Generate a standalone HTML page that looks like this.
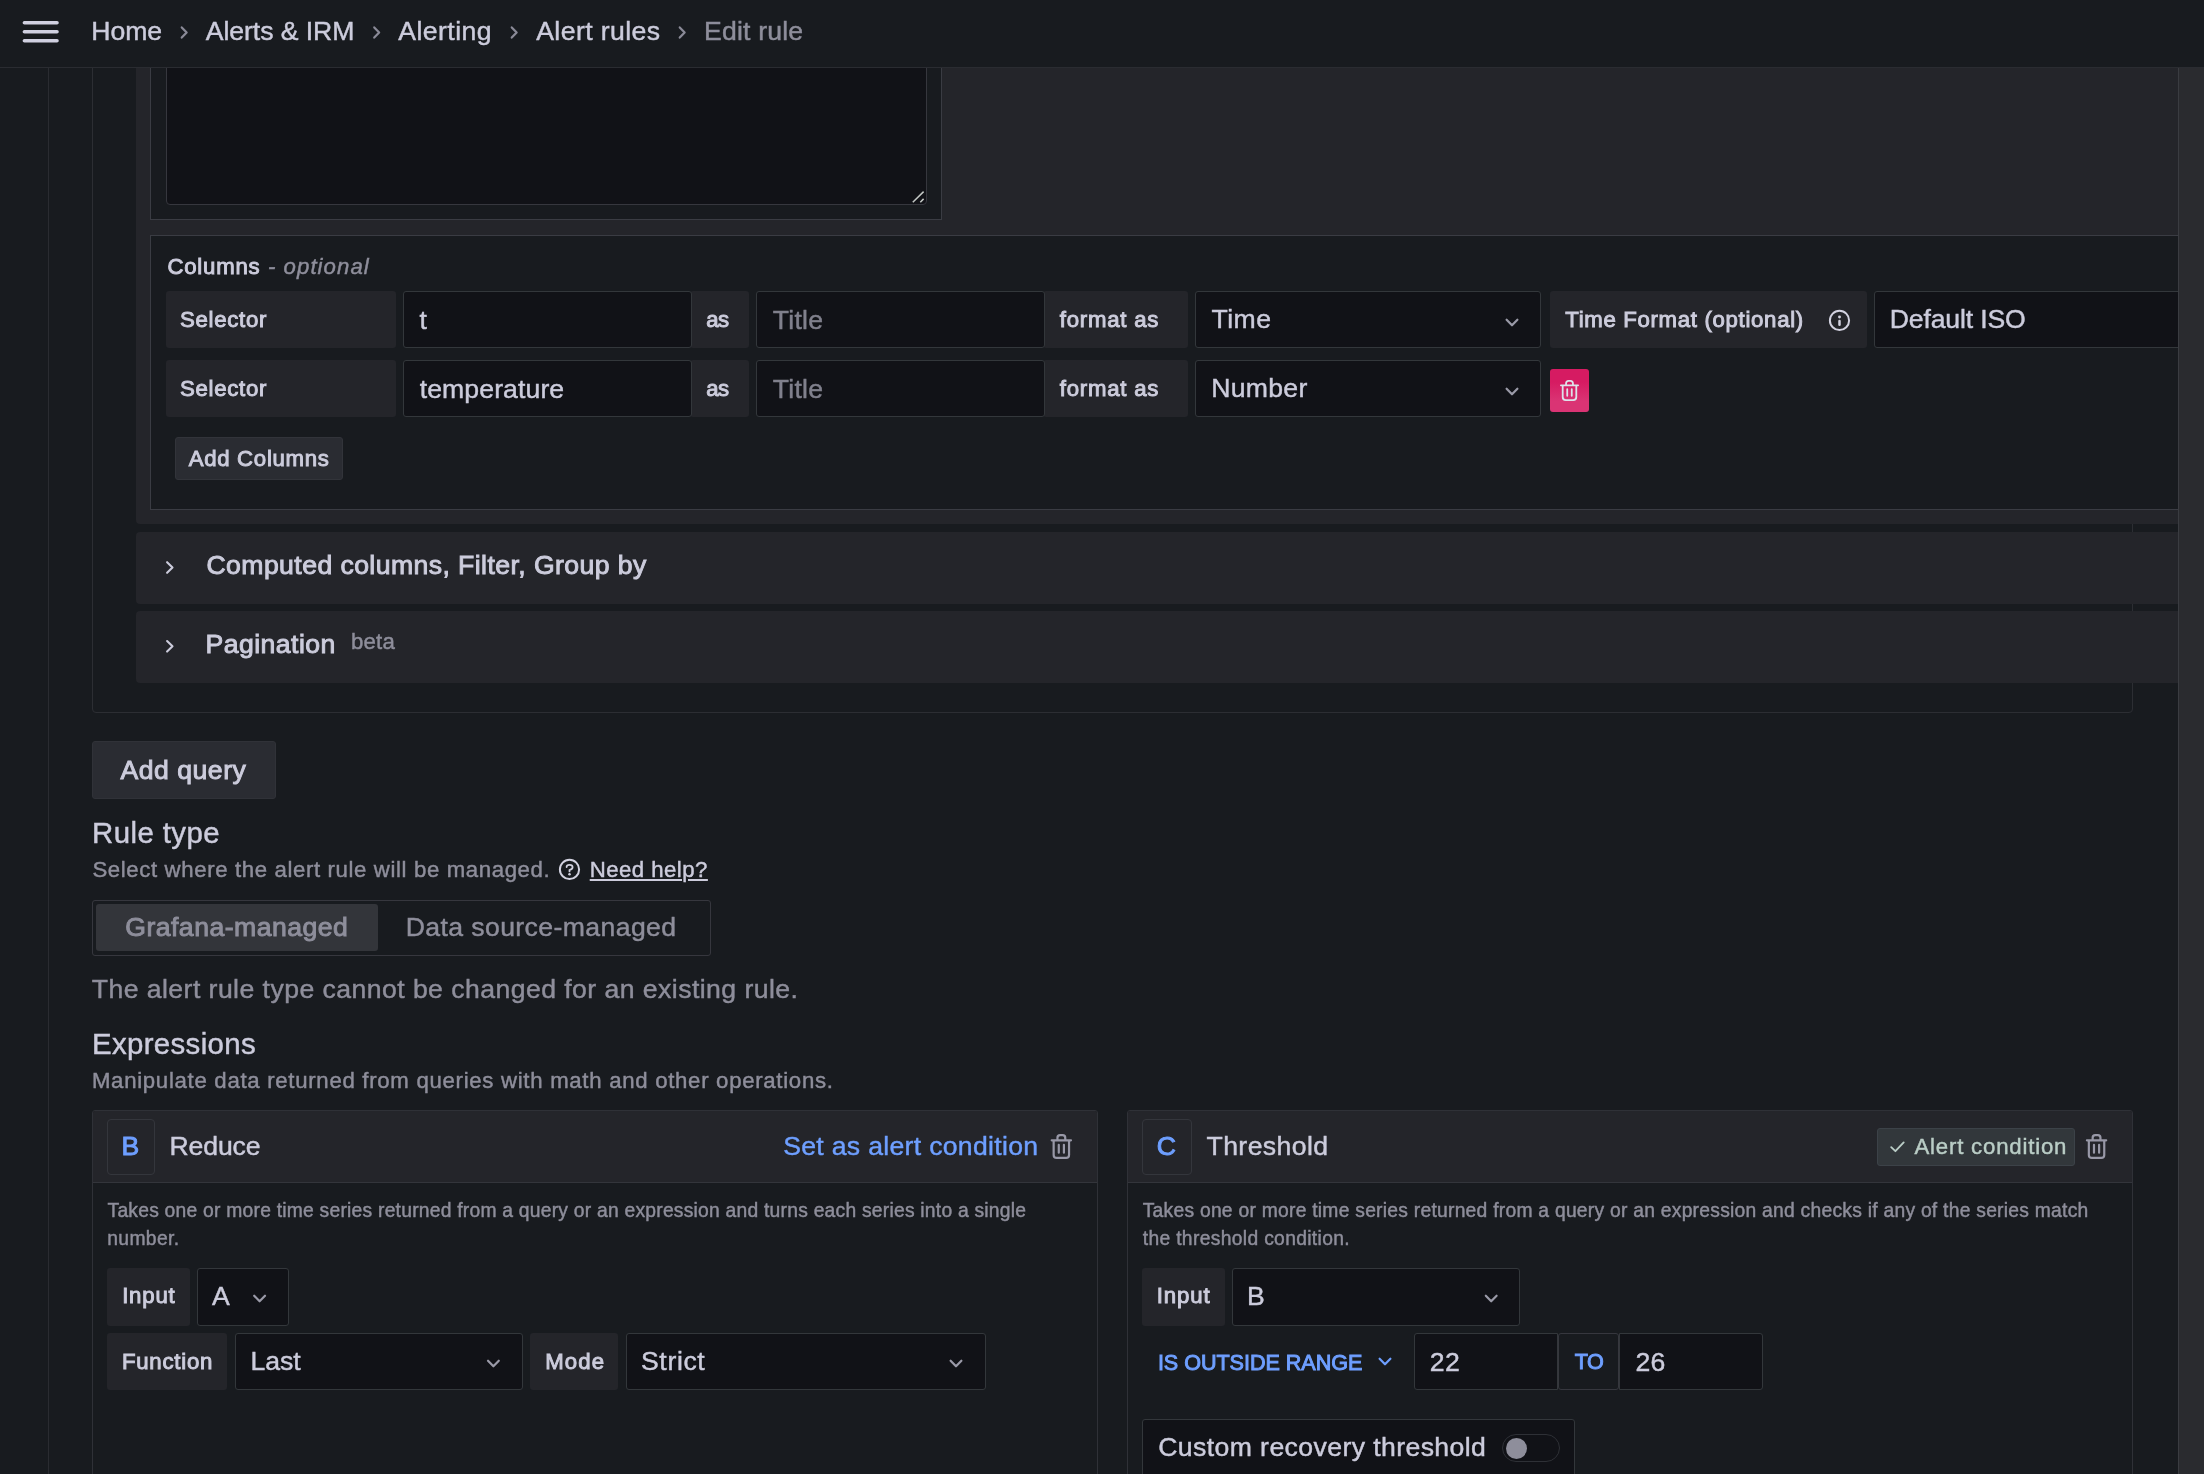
<!DOCTYPE html>
<html lang="en"><head><meta charset="utf-8"><title>Edit rule - Alert rules - Alerting - Grafana</title>
<style>
*{box-sizing:border-box;margin:0;padding:0}
html,body{width:2204px;height:1474px;overflow:hidden;background:#181b1f}
body{position:relative;font-family:"Liberation Sans",sans-serif;color:#ccccdc}
.a{position:absolute}
.t{position:absolute;white-space:nowrap;line-height:30px;height:30px;-webkit-text-stroke:0.45px currentColor}
.m{-webkit-text-stroke:0.95px currentColor}
#tx{position:absolute;left:0;top:0;width:2204px;height:1474px;will-change:transform}
.lbl{position:absolute;background:#24252a;border-radius:3px}
.inp{position:absolute;background:#111217;border:1px solid #33373b;border-radius:3px}
.band{position:absolute;background:#24252a}
svg{position:absolute;overflow:visible}
</style></head>
<body>
<div class="a" style="left:92px;top:0;width:2041px;height:713px;border:1px solid #2c2e33;border-radius:0 0 4px 4px"></div>
<div class="a" style="left:48px;top:68px;width:1px;height:1406px;background:#2a2c31"></div>
<div class="band" style="left:136px;top:68px;width:2042px;height:455.5px;border-radius:0 0 0 4px"></div>
<div class="a" style="left:150px;top:40px;width:792px;height:180px;background:#181b1f;border:1px solid #3a3c43"></div>
<div class="a" style="left:166px;top:40px;width:761px;height:165px;background:#111217;border:1px solid #36373e;border-radius:0 0 4px 4px"></div>
<svg style="left:0;top:0" width="1" height="1"><path d="M912.8 202.2L923.6 191.6M920.3 202.2L923.6 198.9" stroke="#c3c8c5" stroke-width="1.5" stroke-linecap="butt"/></svg>
<div class="a" style="left:150px;top:235px;width:2040px;height:275px;background:#181b1f;border:1px solid #3a3c43"></div>
<div class="lbl" style="left:166px;top:291px;width:230px;height:57.2px;"></div>
<div class="lbl" style="left:690px;top:291px;width:59px;height:57.2px;"></div>
<div class="lbl" style="left:1043px;top:291px;width:145px;height:57.2px;"></div>
<div class="inp" style="left:403px;top:291px;width:288.5px;height:57.2px;"></div>
<div class="inp" style="left:756px;top:291px;width:288.5px;height:57.2px;"></div>
<div class="inp" style="left:1195px;top:291px;width:346px;height:57.2px;"></div>
<div class="lbl" style="left:166px;top:360.3px;width:230px;height:56.5px;"></div>
<div class="lbl" style="left:690px;top:360.3px;width:59px;height:56.5px;"></div>
<div class="lbl" style="left:1043px;top:360.3px;width:145px;height:56.5px;"></div>
<div class="inp" style="left:403px;top:360.3px;width:288.5px;height:56.5px;"></div>
<div class="inp" style="left:756px;top:360.3px;width:288.5px;height:56.5px;"></div>
<div class="inp" style="left:1195px;top:360.3px;width:346px;height:56.5px;"></div>
<div class="lbl" style="left:1550px;top:291px;width:317px;height:57.2px;"></div>
<div class="inp" style="left:1874px;top:291px;width:326px;height:57.2px;"></div>
<svg style="left:0;top:0" width="1" height="1"><path d="M1506.6 319.7L1512 325.3L1517.4 319.7" fill="none" stroke="#9a9aa8" stroke-width="2.2" stroke-linecap="round" stroke-linejoin="round"/></svg>
<svg style="left:0;top:0" width="1" height="1"><path d="M1506.6 388.7L1512 394.3L1517.4 388.7" fill="none" stroke="#9a9aa8" stroke-width="2.2" stroke-linecap="round" stroke-linejoin="round"/></svg>
<svg style="left:0;top:0" width="1" height="1"><circle cx="1839.5" cy="320.45" r="9.6" fill="none" stroke="#d2d2e0" stroke-width="2.0"/><circle cx="1839.5" cy="316.95" r="1.45" fill="#d2d2e0"/><path d="M1839.5 320.95V324.75" stroke="#d2d2e0" stroke-width="2.5" stroke-linecap="round"/></svg>
<div class="a" style="left:1550px;top:369px;width:39px;height:43px;border-radius:3px;background:linear-gradient(180deg,#d61b62 0%,#d61b62 30%,#da3474 75%,#da3474 100%)"></div>
<svg style="left:0;top:0" width="1" height="1"><path d="M1560.90 385.29H1578.10M1566.05 385.29V383.50Q1566.05 380.90 1568.65 380.90H1570.35Q1572.95 380.90 1572.95 383.50V385.29M1562.70 385.29V397.10Q1562.70 400.10 1565.70 400.10H1573.30Q1576.30 400.10 1576.30 397.10V385.29M1567.24 389.03V395.75M1571.76 389.03V395.75" fill="none" stroke="#dde2ea" stroke-width="1.8" stroke-linecap="round" stroke-linejoin="round"/></svg>
<div class="a" style="left:175px;top:437px;width:167.5px;height:43px;border-radius:3px;background:#2a2c32;border:1px solid #32343a"></div>
<div class="band" style="left:136px;top:532px;width:2042px;height:72px;border-radius:4px 0 0 4px"></div>
<div class="band" style="left:136px;top:611px;width:2042px;height:72px;border-radius:4px 0 0 4px"></div>
<svg style="left:0;top:0" width="1" height="1"><path d="M167.10000000000002 562.2L172.5 567.5L167.10000000000002 572.8" fill="none" stroke="#ccccdc" stroke-width="2.1" stroke-linecap="round" stroke-linejoin="round"/></svg>
<svg style="left:0;top:0" width="1" height="1"><path d="M167.10000000000002 641.0L172.5 646.3L167.10000000000002 651.5999999999999" fill="none" stroke="#ccccdc" stroke-width="2.1" stroke-linecap="round" stroke-linejoin="round"/></svg>
<div class="a" style="left:92px;top:741px;width:184px;height:58px;border-radius:3px;background:#2a2c32;border:1px solid #303238"></div>
<svg style="left:0;top:0" width="1" height="1"><circle cx="569.5" cy="869.4" r="9.6" fill="none" stroke="#d2d2e0" stroke-width="2.0"/><path d="M566.6 867.1Q566.6 864.9 569.5 864.9Q572.6 864.9 572.6 867.1999999999999Q572.6 869.0 569.5 870.1V871.4" fill="none" stroke="#d2d2e0" stroke-width="1.75" stroke-linecap="round"/><circle cx="569.5" cy="874.1999999999999" r="1.25" fill="#d2d2e0"/></svg>
<div class="a" style="left:92px;top:900px;width:619px;height:56px;border:1px solid #36373e;border-radius:3px"></div>
<div class="a" style="left:96px;top:904px;width:282px;height:47px;background:#33353a;border-radius:3px"></div>
<div class="a" style="left:92px;top:1110px;width:1006px;height:400px;border:1px solid #2f3137;border-radius:3px 3px 0 0;background:#181b1f"></div>
<div class="a" style="left:93px;top:1111px;width:1004px;height:72px;background:#24252a;border-bottom:1px solid #33353b;border-radius:2px 2px 0 0"></div>
<div class="a" style="left:107px;top:1119px;width:48px;height:56px;border:1px solid #34363c;border-radius:4px"></div>
<div class="a" style="left:1126.5px;top:1110px;width:1006.5px;height:400px;border:1px solid #2f3137;border-radius:3px 3px 0 0;background:#181b1f"></div>
<div class="a" style="left:1127.5px;top:1111px;width:1004.5px;height:72px;background:#24252a;border-bottom:1px solid #33353b;border-radius:2px 2px 0 0"></div>
<div class="a" style="left:1141.5px;top:1119px;width:50px;height:56px;border:1px solid #34363c;border-radius:4px"></div>
<svg style="left:0;top:0" width="1" height="1"><path d="M1051.70 1140.30H1071.00M1057.45 1140.30V1137.70Q1057.45 1135.10 1060.05 1135.10H1062.65Q1065.25 1135.10 1065.25 1137.70V1140.30M1053.65 1140.30V1154.90Q1053.65 1157.90 1056.65 1157.90H1066.05Q1069.05 1157.90 1069.05 1154.90V1140.30M1058.79 1144.75V1152.75M1063.91 1144.75V1152.75" fill="none" stroke="#9898a7" stroke-width="2.2" stroke-linecap="round" stroke-linejoin="round"/></svg>
<div class="lbl" style="left:107px;top:1268px;width:83px;height:57.5px;"></div>
<div class="inp" style="left:197px;top:1268px;width:92px;height:57.5px;"></div>
<svg style="left:0;top:0" width="1" height="1"><path d="M254.20000000000002 1295.7L259.6 1301.3L265.0 1295.7" fill="none" stroke="#9a9aa8" stroke-width="2.2" stroke-linecap="round" stroke-linejoin="round"/></svg>
<div class="lbl" style="left:107px;top:1333px;width:120px;height:57px;"></div>
<div class="inp" style="left:235px;top:1333px;width:288px;height:57px;"></div>
<svg style="left:0;top:0" width="1" height="1"><path d="M488.0 1360.7L493.4 1366.3L498.79999999999995 1360.7" fill="none" stroke="#9a9aa8" stroke-width="2.2" stroke-linecap="round" stroke-linejoin="round"/></svg>
<div class="lbl" style="left:530px;top:1333px;width:88px;height:57px;"></div>
<div class="inp" style="left:626px;top:1333px;width:360px;height:57px;"></div>
<svg style="left:0;top:0" width="1" height="1"><path d="M950.6 1360.7L956 1366.3L961.4 1360.7" fill="none" stroke="#9a9aa8" stroke-width="2.2" stroke-linecap="round" stroke-linejoin="round"/></svg>
<div class="a" style="left:1877px;top:1128px;width:197.5px;height:38px;background:#32373b;border:1px solid #3c4248;border-radius:3px"></div>
<svg style="left:0;top:0" width="1" height="1"><path d="M1891.2 1147.2L1895.4 1151.2L1903.7 1142.4" fill="none" stroke="#bacdc6" stroke-width="1.85" stroke-linecap="round" stroke-linejoin="round"/></svg>
<svg style="left:0;top:0" width="1" height="1"><path d="M2086.90 1140.30H2106.20M2092.65 1140.30V1137.70Q2092.65 1135.10 2095.25 1135.10H2097.85Q2100.45 1135.10 2100.45 1137.70V1140.30M2088.85 1140.30V1154.90Q2088.85 1157.90 2091.85 1157.90H2101.25Q2104.25 1157.90 2104.25 1154.90V1140.30M2093.99 1144.75V1152.75M2099.11 1144.75V1152.75" fill="none" stroke="#9898a7" stroke-width="2.2" stroke-linecap="round" stroke-linejoin="round"/></svg>
<div class="lbl" style="left:1142px;top:1268px;width:83px;height:57.5px;"></div>
<div class="inp" style="left:1232px;top:1268px;width:288px;height:57.5px;"></div>
<svg style="left:0;top:0" width="1" height="1"><path d="M1485.8 1295.7L1491.2 1301.3L1496.6000000000001 1295.7" fill="none" stroke="#9a9aa8" stroke-width="2.2" stroke-linecap="round" stroke-linejoin="round"/></svg>
<svg style="left:0;top:0" width="1" height="1"><path d="M1379.6 1358.7L1385 1364.3L1390.4 1358.7" fill="none" stroke="#6e9fff" stroke-width="2.2" stroke-linecap="round" stroke-linejoin="round"/></svg>
<div class="inp" style="left:1413.5px;top:1333px;width:144.5px;height:57px;border-radius:3px 0 0 3px"></div>
<div class="a" style="left:1557.5px;top:1333px;width:61.5px;height:57px;background:#181b1f;border:1px solid #36373e;border-radius:3px"></div>
<div class="inp" style="left:1619px;top:1333px;width:144px;height:57px;border-radius:0 3px 3px 0"></div>
<div class="inp" style="left:1142px;top:1419px;width:433px;height:71px;"></div>
<div class="a" style="left:1502px;top:1434px;width:57.5px;height:28px;border-radius:15px;background:#111217;border:1px solid #2e3036"></div>
<div class="a" style="left:1505.5px;top:1437.5px;width:21.5px;height:21.5px;border-radius:50%;background:#8e8e9b"></div>
<div class="a" style="left:0;top:0;width:2204px;height:68px;background:#181b1f;border-bottom:1px solid #2a2c31"></div>
<svg style="left:0;top:0" width="1" height="1"><path d="M24.4 22.8H57M24.4 31.8H57M24.4 40.8H57" fill="none" stroke="#d0d0e0" stroke-width="3.6" stroke-linecap="round"/></svg>
<svg style="left:0;top:0" width="1" height="1"><path d="M181.75 27.4L186.64999999999998 32.5L181.75 37.6" fill="none" stroke="#8a8a97" stroke-width="2.2" stroke-linecap="round" stroke-linejoin="round"/></svg>
<svg style="left:0;top:0" width="1" height="1"><path d="M374.25 27.4L379.15 32.5L374.25 37.6" fill="none" stroke="#8a8a97" stroke-width="2.2" stroke-linecap="round" stroke-linejoin="round"/></svg>
<svg style="left:0;top:0" width="1" height="1"><path d="M511.75000000000006 27.4L516.6500000000001 32.5L511.75000000000006 37.6" fill="none" stroke="#8a8a97" stroke-width="2.2" stroke-linecap="round" stroke-linejoin="round"/></svg>
<svg style="left:0;top:0" width="1" height="1"><path d="M679.75 27.4L684.6500000000001 32.5L679.75 37.6" fill="none" stroke="#8a8a97" stroke-width="2.2" stroke-linecap="round" stroke-linejoin="round"/></svg>
<div class="a" style="left:2178px;top:68px;width:26px;height:1406px;background:#2a2b2f;border-left:1px solid #3a3c41"></div>
<div id="tx">
<span class="t" style="left:91.22px;top:16.0px;font-size:26.6px;letter-spacing:-0.033px;color:#ccccdc">Home</span>
<span class="t" style="left:205.72px;top:16.0px;font-size:26.6px;letter-spacing:-0.049px;color:#ccccdc">Alerts &amp; IRM</span>
<span class="t" style="left:398.23px;top:16.0px;font-size:26.6px;letter-spacing:0.453px;color:#ccccdc">Alerting</span>
<span class="t" style="left:536.23px;top:16.0px;font-size:26.6px;letter-spacing:0.414px;color:#ccccdc">Alert rules</span>
<span class="t" style="left:704.02px;top:16.0px;font-size:26.6px;letter-spacing:0.185px;color:#8e8e9b">Edit rule</span>
<span class="t m" style="left:167.47px;top:252.0px;font-size:22.2px;letter-spacing:0.766px;color:#ccccdc">Columns</span>
<span class="t" style="left:267.98px;top:252.0px;font-size:22.2px;letter-spacing:1.051px;color:#8e8e9b;font-style:italic">- optional</span>
<span class="t m" style="left:179.97px;top:304.5px;font-size:22.2px;letter-spacing:0.721px;color:#ccccdc">Selector</span>
<span class="t m" style="left:179.97px;top:373.5px;font-size:22.2px;letter-spacing:0.721px;color:#ccccdc">Selector</span>
<span class="t" style="left:419.5px;top:304.7px;font-size:26.6px;letter-spacing:0px;color:#ccccdc">t</span>
<span class="t" style="left:419.73px;top:373.5px;font-size:26.6px;letter-spacing:0.106px;color:#ccccdc">temperature</span>
<span class="t m" style="left:706.23px;top:304.5px;font-size:22.2px;letter-spacing:-0.54px;color:#ccccdc">as</span>
<span class="t m" style="left:706.23px;top:373.5px;font-size:22.2px;letter-spacing:-0.54px;color:#ccccdc">as</span>
<span class="t" style="left:772.73px;top:304.7px;font-size:26.6px;letter-spacing:0.272px;color:#80808d">Title</span>
<span class="t" style="left:772.73px;top:373.7px;font-size:26.6px;letter-spacing:0.272px;color:#80808d">Title</span>
<span class="t m" style="left:1059.72px;top:304.5px;font-size:22.2px;letter-spacing:0.771px;color:#ccccdc">format as</span>
<span class="t m" style="left:1059.72px;top:373.5px;font-size:22.2px;letter-spacing:0.771px;color:#ccccdc">format as</span>
<span class="t" style="left:1211.47px;top:303.6px;font-size:26.6px;letter-spacing:0.494px;color:#ccccdc">Time</span>
<span class="t" style="left:1211.22px;top:372.6px;font-size:26.6px;letter-spacing:0.304px;color:#ccccdc">Number</span>
<span class="t m" style="left:1565.22px;top:304.5px;font-size:22.2px;letter-spacing:0.684px;color:#ccccdc">Time Format (optional)</span>
<span class="t" style="left:1889.72px;top:303.6px;font-size:26.6px;letter-spacing:-0.143px;color:#ccccdc">Default ISO</span>
<span class="t m" style="left:188.67px;top:443.5px;font-size:22.2px;letter-spacing:0.705px;color:#ccccdc">Add Columns</span>
<span class="t m" style="left:206.47px;top:549.8px;font-size:26.6px;letter-spacing:0.429px;color:#ccccdc">Computed columns, Filter, Group by</span>
<span class="t m" style="left:205.47px;top:629.0px;font-size:26.6px;letter-spacing:0.462px;color:#ccccdc">Pagination</span>
<span class="t" style="left:350.98px;top:626.75px;font-size:22.2px;letter-spacing:0.235px;color:#8e8e9b">beta</span>
<span class="t m" style="left:120.47px;top:755.25px;font-size:26.6px;letter-spacing:0.515px;color:#ccccdc">Add query</span>
<span class="t" style="left:92.02px;top:817.5px;font-size:29.4px;letter-spacing:0.429px;color:#ccccdc">Rule type</span>
<span class="t" style="left:92.42px;top:854.5px;font-size:22.2px;letter-spacing:0.625px;color:#8e8e9b">Select where the alert rule will be managed.</span>
<span class="t" style="left:589.73px;top:854.5px;font-size:22.2px;letter-spacing:0.466px;color:#ccccdc;text-decoration:underline;text-decoration-thickness:1.8px;text-underline-offset:2px">Need help?</span>
<span class="t m" style="left:125.22px;top:912.25px;font-size:26.6px;letter-spacing:0.482px;color:#8e8e9b">Grafana-managed</span>
<span class="t" style="left:405.73px;top:912.25px;font-size:26.6px;letter-spacing:0.4px;color:#8e8e9b">Data source-managed</span>
<span class="t" style="left:91.72px;top:974.2px;font-size:26.6px;letter-spacing:0.452px;color:#8e8e9b">The alert rule type cannot be changed for an existing rule.</span>
<span class="t" style="left:91.92px;top:1028.5px;font-size:29.4px;letter-spacing:0.371px;color:#ccccdc">Expressions</span>
<span class="t" style="left:91.92px;top:1066.25px;font-size:22.2px;letter-spacing:0.704px;color:#8e8e9b">Manipulate data returned from queries with math and other operations.</span>
<span class="t m" style="left:121.62px;top:1130.5px;font-size:26.6px;letter-spacing:0px;color:#6e9fff">B</span>
<span class="t" style="left:169.42px;top:1130.5px;font-size:26.6px;letter-spacing:-0.105px;color:#ccccdc">Reduce</span>
<span class="t" style="left:783.23px;top:1130.5px;font-size:26.6px;letter-spacing:0.309px;color:#6e9fff">Set as alert condition</span>
<span class="t" style="left:107.52px;top:1195.5px;font-size:19.3px;letter-spacing:0.229px;color:#8e8e9b">Takes one or more time series returned from a query or an expression and turns each series into a single</span>
<span class="t" style="left:107.22px;top:1223.5px;font-size:19.3px;letter-spacing:0.373px;color:#8e8e9b">number.</span>
<span class="t m" style="left:122.17px;top:1281.3px;font-size:22.2px;letter-spacing:0.792px;color:#ccccdc">Input</span>
<span class="t" style="left:212.03px;top:1281.0px;font-size:26.6px;letter-spacing:0px;color:#ccccdc">A</span>
<span class="t m" style="left:121.97px;top:1346.5px;font-size:22.2px;letter-spacing:0.756px;color:#ccccdc">Function</span>
<span class="t" style="left:250.62px;top:1345.8px;font-size:26.6px;letter-spacing:-0.109px;color:#ccccdc">Last</span>
<span class="t m" style="left:545.23px;top:1346.5px;font-size:22.2px;letter-spacing:1.129px;color:#ccccdc">Mode</span>
<span class="t" style="left:640.98px;top:1345.8px;font-size:26.6px;letter-spacing:0.642px;color:#ccccdc">Strict</span>
<span class="t m" style="left:1156.8px;top:1130.5px;font-size:26.6px;letter-spacing:0px;color:#6e9fff">C</span>
<span class="t" style="left:1206.52px;top:1130.5px;font-size:26.6px;letter-spacing:0.41px;color:#ccccdc">Threshold</span>
<span class="t" style="left:1914.47px;top:1131.5px;font-size:22.2px;letter-spacing:0.81px;color:#bacdc6">Alert condition</span>
<span class="t" style="left:1142.72px;top:1195.5px;font-size:19.3px;letter-spacing:0.248px;color:#8e8e9b">Takes one or more time series returned from a query or an expression and checks if any of the series match</span>
<span class="t" style="left:1142.72px;top:1223.5px;font-size:19.3px;letter-spacing:0.327px;color:#8e8e9b">the threshold condition.</span>
<span class="t m" style="left:1156.67px;top:1281.3px;font-size:22.2px;letter-spacing:0.917px;color:#ccccdc">Input</span>
<span class="t" style="left:1247.1px;top:1281.0px;font-size:26.6px;letter-spacing:0px;color:#ccccdc">B</span>
<span class="t m" style="left:1157.88px;top:1347.8px;font-size:21.6px;letter-spacing:-0.041px;color:#6e9fff">IS OUTSIDE RANGE</span>
<span class="t" style="left:1429.82px;top:1347.25px;font-size:26.6px;letter-spacing:0.46px;color:#ccccdc">22</span>
<span class="t m" style="left:1574.67px;top:1346.75px;font-size:21.6px;letter-spacing:-0.35px;color:#6e9fff">TO</span>
<span class="t" style="left:1635.42px;top:1347.25px;font-size:26.6px;letter-spacing:0.36px;color:#ccccdc">26</span>
<span class="t" style="left:1158.22px;top:1432.25px;font-size:26.6px;letter-spacing:0.411px;color:#ccccdc">Custom recovery threshold</span>
</div>
</body></html>
